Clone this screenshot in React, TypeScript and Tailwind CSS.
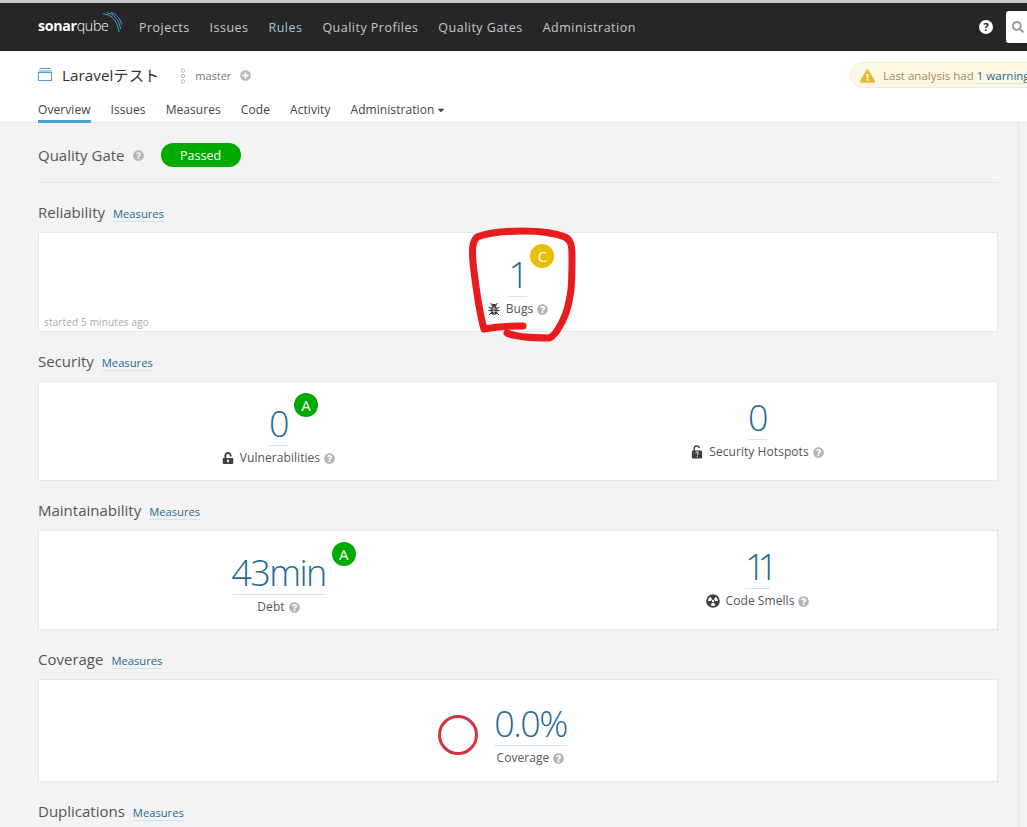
import React from "react";
import { FaQuestionCircle, FaUnlockAlt, FaPlusCircle, FaExclamationTriangle, FaSearch, FaCaretDown } from "react-icons/fa";

const Help = ({ className = "" }: { className?: string }) => (
  <FaQuestionCircle className={`inline-block w-[11px] h-[11px] text-[#b4b4b4] ${className}`} />
);

const Smell = () => (
  <svg viewBox="0 0 14 14" className="w-[14px] h-[14px]">
    <circle cx="7" cy="7" r="6.8" fill="#404040" />
    <circle cx="7" cy="7" r="1.2" fill="#fff" />
    <path d="M8 8.73 L9.5 11.33 A5 5 0 0 1 4.5 11.33 L6 8.73 A2 2 0 0 0 8 8.73Z" fill="#fff" />
    <path d="M5 7 L2 7 A5 5 0 0 1 4.5 2.67 L6 5.27 A2 2 0 0 0 5 7Z" fill="#fff" />
    <path d="M9 7 L12 7 A5 5 0 0 0 9.5 2.67 L8 5.27 A2 2 0 0 1 9 7Z" fill="#fff" />
  </svg>
);

const Bug = () => (
  <svg viewBox="0 0 12 14" className="w-[12px] h-[14px]" fill="none" stroke="#333" strokeWidth="1">
    <path d="M2.5 1 L4.5 3.5 M9.5 1 L7.5 3.5 M0.5 5 L3 6.5 M11.5 5 L9 6.5 M0.5 8.5 H3 M11.5 8.5 H9 M1 13 L3.2 10.8 M11 13 L8.8 10.8" />
    <ellipse cx="6" cy="3.3" rx="2.2" ry="1.5" fill="#333" stroke="none" />
    <ellipse cx="6" cy="8.5" rx="3.4" ry="4.6" fill="#333" stroke="none" />
    <path d="M6 4.5 V13" stroke="#fff" strokeWidth="0.7" />
    <path d="M3 7 H9 M3 9.5 H9" stroke="#fff" strokeWidth="0.5" />
  </svg>
);

const Hotspot = () => (
  <svg viewBox="0 0 12 15" className="w-[12px] h-[14px] text-[#404040]">
    <path d="M3 6.5 V4 A2.7 2.7 0 0 1 8.4 3.4" fill="none" stroke="currentColor" strokeWidth="1.5" />
    <rect x="0.5" y="6" width="11" height="8.5" rx="1.5" fill="currentColor" />
    <path d="M4.6 8.8 A1.4 1.4 0 1 1 6.4 10.2 V11" fill="none" stroke="#fff" strokeWidth="1" />
    <circle cx="6.2" cy="12.6" r="0.6" fill="#fff" />
  </svg>
);

function SectionTitle({ title }: { title: string }) {
  return (
    <div className="flex items-baseline h-[20px] mt-[18px] pt-[1px]">
      <span className="text-[15px] leading-[20px] text-[#555]">{title}</span>
      <a className="ml-[8px] text-[11.2px] leading-[15px] text-[#236a97] border-b border-[#cfe3f0]">Measures</a>
    </div>
  );
}

function Rating({ letter, color, className = "" }: { letter: string; color: string; className?: string }) {
  return (
    <span
      className={`absolute left-full top-[-10px] w-[24px] h-[24px] rounded-full flex items-center justify-center text-white text-[15px] leading-none ${color} ${className}`}
    >
      {letter}
    </span>
  );
}

function Measure({
  value,
  label,
  icon,
  rating,
  className = "",
  tracking = "tracking-[-1.6px]",
}: {
  value: string;
  label: string;
  icon?: React.ReactNode;
  rating?: React.ReactNode;
  className?: string;
  tracking?: string;
}) {
  return (
    <div className={`flex flex-col items-center ${className}`}>
      <div className="relative border-b border-[#cfe3f0] h-[43px]">
        <span className={`block text-[36px] leading-[42px] font-light text-[#236a97] ${tracking}`}>{value}</span>
        {rating}
      </div>
      <div className="flex items-center gap-[6px] h-[24px] text-[12px] tracking-[0.06px] text-[#555]">
        {icon}
        <span>{label}</span>
        <Help className="ml-[-2px]" />
      </div>
    </div>
  );
}

const Card = ({ children, className = "" }: { children: React.ReactNode; className?: string }) => (
  <div className={`relative bg-white border border-[#e6e6e6] mt-[11px] ${className}`}>{children}</div>
);

export default function App() {
  return (
    <div
      className="relative h-[827px] w-[1027px] overflow-hidden bg-[#f3f3f3]"
      style={{ fontFamily: '"Open Sans", "Noto Sans CJK JP", sans-serif' }}
    >
      <div className="h-[3px] bg-[#c8c8c8]" />
      <nav className="h-[48px] bg-[#262626] flex items-center pl-[38px] relative">
        <div className="relative flex items-baseline w-[81px] text-[14.2px] leading-[20px] text-white tracking-[-0.3px] mt-[-2px]">
          <span className="font-bold">sonar</span>
          <span className="font-light">qube</span>
          <svg viewBox="0 0 20 22" className="absolute left-[64px] top-[-4px] w-[20px] h-[22px]" fill="none" stroke="#4b9fd5" strokeWidth="1">
            <path d="M1 2 C9 2 15 8 17 20" />
            <path d="M5 0.8 C11 1.5 17 7 18.6 17" />
            <path d="M9 0.5 C14 2 18.5 6 19.6 13" />
          </svg>
        </div>
        <div className="flex items-center gap-[20px] ml-[20px] mt-[2px] text-[12.5px] tracking-[0.48px] text-[#c0cacc]">
          <span>Projects</span>
          <span>Issues</span>
          <span className="text-[#a5c8d8]">Rules</span>
          <span>Quality Profiles</span>
          <span>Quality Gates</span>
          <span>Administration</span>
        </div>
        <div className="ml-auto flex items-center">
          <span className="w-[14px] h-[14px] rounded-full bg-white text-[#262626] text-[11px] font-bold flex items-center justify-center mr-[13px]">?</span>
          <div className="w-[21px] h-[32px] bg-white rounded-l-[3px] flex items-center pl-[6px]">
            <FaSearch className="w-[12px] h-[12px] text-[#999]" />
          </div>
        </div>
      </nav>

      <header className="h-[72px] bg-white border-b border-[#e6e6e6] relative px-[38px]">
        <div className="h-[49px] flex items-center">
          <svg viewBox="0 0 14 13" className="w-[14px] h-[13px] mt-[-3px]" fill="none" stroke="#4b9fd5" strokeWidth="1">
            <path d="M1.5 0.5 H12.5 M0.5 3 H13.5" />
            <rect x="0.5" y="4.5" width="13" height="8" />
          </svg>
          <span className="ml-[10px] text-[15.3px] text-[#333]">Laravelテスト</span>
          <svg viewBox="0 0 6 16" className="ml-[21px] w-[6px] h-[16px]" fill="none" stroke="#bbb" strokeWidth="1">
            <circle cx="3" cy="2.5" r="1.7" />
            <circle cx="3" cy="8" r="1.7" />
            <circle cx="3" cy="13.5" r="1.7" />
          </svg>
          <span className="ml-[9px] pt-[1px] text-[11px] text-[#777]">master</span>
          <FaPlusCircle className="ml-[9px] w-[11px] h-[11px] text-[#bbb]" />
          <div className="absolute left-[850px] top-[11px] h-[26px] w-[200px] bg-[#fcf8e3] border border-[#faebcc] rounded-full flex items-center pl-[9px] pt-[1px] whitespace-nowrap">
            <FaExclamationTriangle className="w-[15px] h-[14px] text-[#e6b93e]" />
            <span className="ml-[8px] text-[11.5px] text-[#a88a5c]">Last analysis had</span>
            <span className="ml-[3px] text-[11.5px] text-[#236a97] border-b border-[#cfe3f0] leading-[15px]">1 warning</span>
          </div>
        </div>
        <div className="flex items-start gap-[20px] text-[12px] tracking-[0.07px] text-[#444]">
          <span className="relative h-[23px] leading-[20px]">
            Overview
            <span className="absolute left-0 right-0 top-[20px] h-[3px] bg-[#4b9fd5]" />
          </span>
          <span className="leading-[20px]">Issues</span>
          <span className="leading-[20px]">Measures</span>
          <span className="leading-[20px]">Code</span>
          <span className="leading-[20px]">Activity</span>
          <span className="leading-[20px] flex items-center">
            Administration
            <FaCaretDown className="ml-[2px] w-[10px] h-[10px] text-[#444]" />
          </span>
        </div>
      </header>

      <main className="w-[960px] ml-[38px]">
        <div className="h-[60px] border-b border-[#e6e6e6] flex items-center pt-[5px]">
          <span className="text-[15px] text-[#555]">Quality Gate</span>
          <Help className="ml-[8px]" />
          <span className="ml-[17px] w-[80px] h-[24px] pt-[2px] rounded-full bg-[#00aa00] text-white text-[12.5px] flex items-center justify-center">Passed</span>
        </div>

        <SectionTitle title="Reliability" />
        <Card className="h-[100px] flex justify-center pt-[21px]">
          <Measure
            value="1"
            label="Bugs"
            icon={<Bug />}
            rating={<Rating letter="C" color="bg-[#eabe06] ml-[3px]" />}
          />
          <span className="absolute left-[5px] bottom-[1px] text-[10px] tracking-[0.15px] text-[#aaa]">started 5 minutes ago</span>
        </Card>

        <SectionTitle title="Security" />
        <Card className="h-[100px] grid grid-cols-2">
          <Measure
            value="0"
            label="Vulnerabilities"
            className="pt-[21px]"
            icon={<FaUnlockAlt className="w-[12px] h-[12px] text-[#404040]" />}
            rating={<Rating letter="A" color="bg-[#00aa00] ml-[6px]" />}
          />
          <Measure value="0" label="Security Hotspots" className="pt-[15px]" icon={<Hotspot />} />
        </Card>

        <SectionTitle title="Maintainability" />
        <Card className="h-[100px] grid grid-cols-2">
          <Measure value="43min" label="Debt" className="pt-[21px]" rating={<Rating letter="A" color="bg-[#00aa00] ml-[6px]" />} />
          <Measure value="11" label="Code Smells" className="pt-[15px]" icon={<Smell />} tracking="tracking-[-8px]" />
        </Card>

        <SectionTitle title="Coverage" />
        <Card className="h-[103px] flex items-center justify-center pt-[12px] pr-[31px]">
          <div className="w-[40px] h-[40px] rounded-full border-[3px] border-[#d4333f] mr-[16px] mt-[-3px]" />
          <Measure value="0.0%" label="Coverage" />
        </Card>

        <SectionTitle title="Duplications" />
      </main>

      <div className="absolute left-[1018px] top-[123px] bottom-0 w-px bg-[#e6e6e6]" />

      <svg className="absolute left-0 top-0 w-[1027px] h-[827px] pointer-events-none" viewBox="0 0 1027 827" fill="none">
        <path
          d="M523 326 C510 326 495 327 484 329 C480 315 475 280 473 263 C472 250 472 242 477 237 C490 232 510 231 523 231 C540 231 555 233 565 237 C571 240 572 246 572 255 C572 270 572 280 571 290 C569 305 566 315 562 322 C557 332 553 337 549 338 C535 338 515 337 507 333"
          stroke="#e81c1c"
          strokeWidth="7"
          strokeLinecap="round"
          strokeLinejoin="round"
        />
      </svg>
    </div>
  );
}
